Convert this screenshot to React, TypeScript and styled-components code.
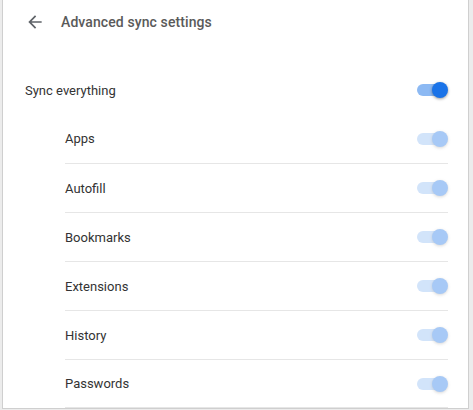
import React from 'react';
import styled, {createGlobalStyle} from 'styled-components';

const GlobalStyle = createGlobalStyle`
  * {
    box-sizing: border-box;
  }
  html, body {
    margin: 0;
    padding: 0;
    background: #ececec;
  }
  body {
    font-family: Roboto, 'Liberation Sans', sans-serif;
    color: #333;
  }
`;

const items = ['Apps', 'Autofill', 'Bookmarks', 'Extensions', 'History', 'Passwords'];

function App() {
  return (
    <Frame>
      <GlobalStyle />
      <Panel>
        <Header>
          <BackButton aria-label="Back">
            <svg width="20" height="20" viewBox="0 0 24 24">
              <path fill="currentColor" d="M20 11H7.83l5.59-5.59L12 4l-8 8 8 8 1.41-1.41L7.83 13H20v-2z" />
            </svg>
          </BackButton>
          <Title>Advanced sync settings</Title>
        </Header>
        <Row>
          <Label>Sync everything</Label>
          <Toggle $checked />
        </Row>
        <SubList>
          {items.map(i => (
            <SubRow key={i}>
              <Label>{i}</Label>
              <Toggle $checked $disabled />
            </SubRow>
          ))}
        </SubList>
      </Panel>
    </Frame>
  );
}

const Frame = styled.div`
  width: 473px;
  height: 410px;
  padding: 0 4px 1px 2px;
  background: #ececec;
  overflow: hidden;
`;

const Panel = styled.div`
  height: 100%;
  background: #fff;
  border: 1px solid #cfcfcf;
  border-top: none;
  overflow: hidden;
  padding-right: 20px;
`;

const Header = styled.div`
  height: 44px;
  display: flex;
  align-items: center;
  padding-left: 20px;
  margin-bottom: 22px;
`;

const BackButton = styled.div`
  width: 24px;
  height: 24px;
  display: flex;
  align-items: center;
  justify-content: center;
  color: #5f6368;
  margin-right: 14px;
`;

const Title = styled.div`
  font-size: 14px;
  font-weight: 500;
  color: #5a5a5a;
  letter-spacing: 0.1px;
`;

const Row = styled.div`
  height: 48px;
  display: flex;
  align-items: center;
  justify-content: space-between;
  padding-left: 22px;
`;

const SubList = styled.div`
  padding-left: 62px;
`;

const SubRow = styled.div`
  height: 49px;
  display: flex;
  align-items: center;
  justify-content: space-between;
  & + & {
    border-top: 1px solid #e6e6e6;
  }
  &:last-child {
    border-bottom: 1px solid #e6e6e6;
  }
`;

const Label = styled.div`
  font-size: 13px;
  color: #333;
`;

const Toggle = styled.div<{$checked?: boolean; $disabled?: boolean}>`
  position: relative;
  width: 34px;
  height: 16px;
  opacity: ${p => (p.$disabled ? 0.38 : 1)};
  &::before {
    content: '';
    position: absolute;
    left: 3px;
    top: 2px;
    width: 28px;
    height: 12px;
    border-radius: 6px;
    background: ${p => (p.$checked ? 'rgba(26, 115, 232, 0.5)' : '#bdc1c6')};
  }
  &::after {
    content: '';
    position: absolute;
    top: 0;
    left: ${p => (p.$checked ? '18px' : '0')};
    width: 16px;
    height: 16px;
    border-radius: 50%;
    background: ${p => (p.$checked ? '#1a73e8' : '#fff')};
    box-shadow: 0 1px 3px rgba(0, 0, 0, 0.4);
  }
`;

export default App;
